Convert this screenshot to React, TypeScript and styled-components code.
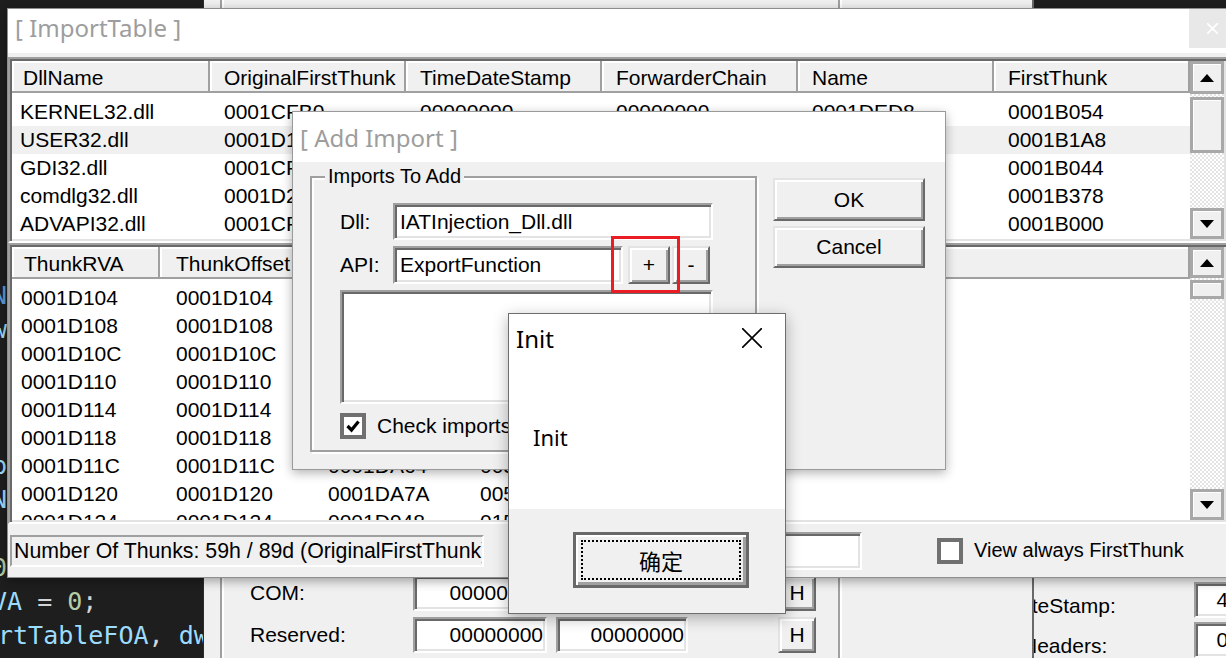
import React from "react";
import styled, { createGlobalStyle, css } from "styled-components";

const SANS = `"Liberation Sans", Arial, sans-serif`;
const UI = `"Noto Sans", "Open Sans", sans-serif`;
const CJK = `"Noto Sans CJK SC", "Noto Sans", sans-serif`;
const MONO = `"DejaVu Sans Mono", "Liberation Mono", monospace`;

const GlobalStyle = createGlobalStyle`
  html, body { margin: 0; padding: 0; background: #1e1e1e; }
  body { overflow: hidden; }
  *, *::before, *::after { box-sizing: border-box; }
`;

const sunken = css`
  border: 2px solid;
  border-color: #a0a0a0 #ffffff #ffffff #a0a0a0;
  box-shadow: inset 2px 2px 0 #696969, inset -2px -2px 0 #e3e3e3;
`;

const raised = css`
  background: #f0f0f0;
  border: 2px solid;
  border-color: #e3e3e3 #696969 #696969 #e3e3e3;
  box-shadow: inset 2px 2px 0 #ffffff, inset -2px -2px 0 #a0a0a0;
`;

const Desktop = styled.div`
  position: relative;
  width: 1226px;
  height: 658px;
  overflow: hidden;
  background: #1e1e1e;
  font-family: ${SANS};
  font-size: 21px;
  color: #000;
`;

/* ---------- code editor behind ---------- */
const Editor = styled.div`
  position: absolute;
  left: 0;
  top: 0;
  width: 203px;
  height: 658px;
  overflow: hidden;
  background: #1e1e1e;
  display: flex;
  flex-direction: column;
  justify-content: flex-end;
  padding-bottom: 5px;
  font-family: ${MONO};
  font-size: 25px;
`;
const CodeLine = styled.div<{ $shift: number }>`
  flex: none;
  height: 34px;
  line-height: 34px;
  white-space: pre;
  margin-left: ${(p) => p.$shift}px;
`;
const Tok = styled.span<{ $c: string }>`
  color: ${(p) => p.$c};
`;

/* ---------- generic windows ---------- */
const Win = styled.div<{ $x: number; $y: number; $w: number; $h: number }>`
  position: absolute;
  left: ${(p) => p.$x}px;
  top: ${(p) => p.$y}px;
  width: ${(p) => p.$w}px;
  height: ${(p) => p.$h}px;
  display: flex;
  flex-direction: column;
  background: #f0f0f0;
`;

const PeWin = styled(Win)`
  border: 1px solid #8e8e8e;
  justify-content: flex-end;
  gap: 5px;
  padding: 0 0 12px 18px;
`;
const PeRow = styled.div`
  display: flex;
  align-items: center;
  height: 35px;
  flex: none;
`;
const PeLabel = styled.span`
  width: 235px;
  flex: none;
  padding-top: 13px;
`;

const DirWin = styled(Win)`
  border-left: 1px solid #2c2c2c;
  border-right: 2px solid #696969;
  flex-direction: row;
  padding-left: 16px;
`;
const DirGroup = styled.div`
  width: 620px;
  height: 100%;
  border-left: 2px solid #a0a0a0;
  border-right: 2px solid #a0a0a0;
  box-shadow: inset 2px 0 0 #fff, 2px 0 0 #fff;
  display: flex;
  flex-direction: column;
  justify-content: flex-end;
  gap: 6px;
  padding: 0 0 5px 28px;
`;
const DirRow = styled.div`
  display: flex;
  align-items: center;
  height: 36px;
  flex: none;
`;
const DirLabel = styled.span`
  width: 163px;
  flex: none;
`;
const NumField = styled.div<{ $w: number; $gap?: number }>`
  ${sunken};
  background: #fff;
  width: ${(p) => p.$w}px;
  height: 36px;
  flex: none;
  margin-left: ${(p) => p.$gap ?? 0}px;
  text-align: right;
  padding-right: 2px;
  line-height: 32px;
  overflow: hidden;
  white-space: nowrap;
`;
const SmallButton = styled.div<{ $w: number; $h: number; $gap?: number }>`
  ${raised};
  width: ${(p) => p.$w}px;
  height: ${(p) => p.$h}px;
  flex: none;
  margin-left: ${(p) => p.$gap ?? 0}px;
  display: flex;
  align-items: center;
  justify-content: center;
  font-size: 21px;
`;

/* ---------- ImportTable window ---------- */
const ImportWin = styled(Win)`
  border: 1px solid #8e8e8e;
  box-shadow: 0 3px 10px rgba(0, 0, 0, 0.35);
`;
const TitleBar = styled.div<{ $h: number; $pb?: number }>`
  flex: none;
  height: ${(p) => p.$h}px;
  background: #fff;
  display: flex;
  align-items: center;
  justify-content: space-between;
  padding-left: 7px;
  padding-bottom: ${(p) => p.$pb ?? 0}px;
`;
const TitleText = styled.span`
  font-family: ${UI};
  font-size: 24px;
  color: #9d9d9d;
  white-space: nowrap;
`;
const CloseBox = styled.div`
  align-self: flex-start;
  width: 46px;
  height: 39px;
  margin-right: 11px;
  background: #e8e8e8;
  display: flex;
  align-items: center;
  justify-content: center;
`;
const ImportBody = styled.div`
  flex: 1;
  display: flex;
  flex-direction: column;
  padding-top: 4px;
`;

/* list view */
const ListFrame = styled.div<{ $h: number }>`
  flex: none;
  width: 1220px;
  height: ${(p) => p.$h}px;
  display: flex;
  background: #fff;
  ${sunken};
  padding: 2px;
`;
const ListBody = styled.div`
  flex: 1;
  min-width: 0;
  overflow: hidden;
  display: flex;
  flex-direction: column;
`;
const GridRow = styled.div<{ $cols: string }>`
  display: grid;
  grid-template-columns: ${(p) => p.$cols};
  flex: none;
`;
const HeaderRow = styled(GridRow)`
  height: 32px;
`;
const HeaderCell = styled.div<{ $pad: number }>`
  background: #f0f0f0;
  border-right: 2px solid #a0a0a0;
  border-bottom: 2px solid #a0a0a0;
  box-shadow: inset 2px 2px 0 #fff;
  padding-left: ${(p) => p.$pad}px;
  padding-top: 4px;
  display: flex;
  align-items: center;
  white-space: nowrap;
  overflow: hidden;
`;
const HeaderGap = styled.div`
  flex: none;
  height: 5px;
`;
const DataRow = styled(GridRow)<{ $sel?: boolean }>`
  height: 28px;
  line-height: 28px;
  background: ${(p) => (p.$sel ? "#f0f0f0" : "transparent")};
`;
const DataCell = styled.div<{ $pad: number }>`
  padding-left: ${(p) => p.$pad}px;
  white-space: nowrap;
  overflow: hidden;
`;
const ScrollBar = styled.div`
  flex: none;
  width: 34px;
  display: flex;
  flex-direction: column;
  background: #f0f0f0;
`;
const ScrollPart = styled.div<{ $h: number }>`
  flex: none;
  height: ${(p) => p.$h}px;
  background: #f0f0f0;
  border: 3px solid #a8a8a8;
  box-shadow: inset 1px 1px 0 #fff;
  display: flex;
  align-items: center;
  justify-content: center;
`;
const Track = styled.div<{ $h?: number }>`
  flex: ${(p) => (p.$h ? "none" : "1")};
  height: ${(p) => (p.$h ? `${p.$h}px` : "auto")};
  background-color: #ffffff;
  background-image: repeating-conic-gradient(#ffffff 0% 25%, #e4e4e4 0% 50%);
  background-size: 4px 4px;
`;

/* status */
const StatusBar = styled.div`
  flex: 1;
  display: flex;
  align-items: center;
  padding-left: 2px;
`;
const StatusField = styled.div`
  flex: none;
  width: 474px;
  height: 32px;
  border: 2px solid;
  border-color: #a0a0a0 #fff #fff #a0a0a0;
  padding-left: 2px;
  line-height: 28px;
  font-size: 21.3px;
  white-space: nowrap;
  overflow: hidden;
`;
const WhiteEdit = styled.div<{ $w: number; $h: number; $gap?: number }>`
  ${sunken};
  background: #fff;
  flex: none;
  width: ${(p) => p.$w}px;
  height: ${(p) => p.$h}px;
  margin-left: ${(p) => p.$gap ?? 0}px;
  padding-left: 5px;
  line-height: ${(p) => p.$h - 4}px;
  white-space: nowrap;
  overflow: hidden;
`;
const CheckLine = styled.label<{ $gap?: number; $size?: number }>`
  display: flex;
  align-items: center;
  gap: 11px;
  margin-left: ${(p) => p.$gap ?? 0}px;
  font-size: ${(p) => p.$size ?? 21}px;
  white-space: nowrap;
`;
const CheckBox = styled.span`
  flex: none;
  width: 26px;
  height: 26px;
  background: #fff;
  border: 4px solid #707070;
  display: flex;
  align-items: center;
  justify-content: center;
`;

/* ---------- Add Import dialog ---------- */
const AddWin = styled(Win)`
  border: 1px solid #9a9a9a;
  box-shadow: 0 3px 10px rgba(0, 0, 0, 0.3);
`;
const DialogBody = styled.div`
  flex: 1;
  display: flex;
  align-items: flex-start;
  gap: 16px;
  padding: 14px 0 0 17px;
`;
const GroupBox = styled.div`
  position: relative;
  flex: none;
  width: 447px;
  height: 276px;
  border: 2px solid #a0a0a0;
  box-shadow: inset 2px 2px 0 #fff, 2px 2px 0 #fff;
  display: flex;
  flex-direction: column;
  padding: 25px 0 0 28px;
`;
const GroupLegend = styled.span`
  position: absolute;
  left: 13px;
  top: -15px;
  line-height: 26px;
  padding: 0 3px;
  background: #f0f0f0;
  font-size: 20px;
`;
const FormRow = styled.div<{ $h: number; $mt?: number }>`
  display: flex;
  align-items: center;
  height: ${(p) => p.$h}px;
  margin-top: ${(p) => p.$mt ?? 0}px;
  flex: none;
`;
const FieldLabel = styled.span`
  width: 53px;
  flex: none;
`;
const PlusWrap = styled.div`
  position: relative;
  margin-left: 5px;
  flex: none;
  display: flex;
`;
const RedMark = styled.div`
  position: absolute;
  left: -17px;
  top: -10px;
  right: -10px;
  bottom: -9px;
  border: 3px solid #ea1c24;
  z-index: 2;
  pointer-events: none;
`;
const ListBox = styled.div`
  ${sunken};
  background: #fff;
  width: 373px;
  height: 114px;
  margin-top: 6px;
  flex: none;
`;
const ButtonCol = styled.div`
  flex: none;
  width: 152px;
  margin-top: 2px;
  display: flex;
  flex-direction: column;
  gap: 5px;
`;
const DlgButton = styled.div<{ $h: number }>`
  ${raised};
  height: ${(p) => p.$h}px;
  display: flex;
  align-items: center;
  justify-content: center;
  font-size: 21px;
`;

/* ---------- Message box ---------- */
const MsgWin = styled(Win)`
  border: 1px solid #6e6e6e;
  box-shadow: 0 4px 14px rgba(0, 0, 0, 0.3);
`;
const MsgTop = styled.div`
  flex: none;
  height: 195px;
  background: #fff;
  display: flex;
  flex-direction: column;
`;
const MsgTitleRow = styled.div`
  height: 48px;
  display: flex;
  align-items: center;
  justify-content: space-between;
  padding: 0 23px 0 7px;
`;
const MsgTitle = styled.span`
  font-family: ${UI};
  font-size: 24px;
  color: #000;
`;
const MsgText = styled.div`
  margin-top: 62px;
  padding-left: 24px;
  line-height: 26px;
  font-family: ${UI};
  font-size: 22px;
  color: #000;
`;
const MsgFooter = styled.div`
  flex: 1;
  display: flex;
  justify-content: flex-end;
  align-items: flex-start;
  padding: 23px 36px 0 0;
`;
const DefaultButton = styled.div`
  width: 176px;
  height: 56px;
  background: #f0f0f0;
  border: 3px solid #686868;
  box-shadow: inset 2px 2px 0 #fff, inset -3px -3px 0 #a0a0a0;
  outline: 2px dotted #000;
  outline-offset: -10px;
  display: flex;
  align-items: center;
  justify-content: center;
  font-family: ${CJK};
  font-size: 22px;
  color: #000;
`;

/* ---------- icons ---------- */
const UpArrow = () => (
  <svg width="14" height="8" viewBox="0 0 14 8">
    <polygon points="0,8 14,8 7,0" fill="#000" />
  </svg>
);
const DownArrow = () => (
  <svg width="14" height="8" viewBox="0 0 14 8">
    <polygon points="0,0 14,0 7,8" fill="#000" />
  </svg>
);
const CheckMark = () => (
  <svg width="16" height="16" viewBox="0 0 16 16">
    <path d="M2.5 8 L6.5 12 L13.5 3.5" fill="none" stroke="#000" strokeWidth="3.2" />
  </svg>
);
const XIcon = ({ size, color, w }: { size: number; color: string; w: number }) => (
  <svg width={size} height={size} viewBox={`0 0 ${size} ${size}`}>
    <path d={`M0 0 L${size} ${size} M${size} 0 L0 ${size}`} stroke={color} strokeWidth={w} />
  </svg>
);

/* ---------- list view component ---------- */
type ScrollSpec = { up: number; gap: number; thumb: number; down: number };
function ListView(props: {
  height: number;
  cols: number[];
  headers: string[];
  rows: string[][];
  selected?: number;
  headPad: [number, number];
  cellPad: [number, number];
  scroll: ScrollSpec;
}) {
  const tpl = props.cols.map((c) => `${c}px`).join(" ");
  return (
    <ListFrame $h={props.height}>
      <ListBody>
        <HeaderRow $cols={tpl}>
          {props.headers.map((h, i) => (
            <HeaderCell key={i} $pad={i === 0 ? props.headPad[0] : props.headPad[1]}>
              {h}
            </HeaderCell>
          ))}
        </HeaderRow>
        <HeaderGap />
        {props.rows.map((r, ri) => (
          <DataRow key={ri} $cols={tpl} $sel={ri === props.selected}>
            {r.map((c, ci) => (
              <DataCell key={ci} $pad={ci === 0 ? props.cellPad[0] : props.cellPad[1]}>
                {c}
              </DataCell>
            ))}
          </DataRow>
        ))}
      </ListBody>
      <ScrollBar>
        <ScrollPart $h={props.scroll.up}>
          <UpArrow />
        </ScrollPart>
        <Track $h={props.scroll.gap} />
        <ScrollPart $h={props.scroll.thumb} />
        <Track />
        <ScrollPart $h={props.scroll.down}>
          <DownArrow />
        </ScrollPart>
      </ScrollBar>
    </ListFrame>
  );
}

/* ---------- data ---------- */
const COL = { v: "#9cdcfe", o: "#d4d4d4", n: "#b5cea8", k: "#569cd6" };
type Line = { shift: number; toks: [string, string][] };
const blank: Line = { shift: 0, toks: [["    ", COL.o]] };
const codeLines: Line[] = [
  blank,
  blank,
  blank,
  blank,
  blank,
  blank,
  blank,
  blank,
  { shift: -8, toks: [["NULL", COL.k]] },
  { shift: -8, toks: [["wImportRVA", COL.v]] },
  blank,
  blank,
  blank,
  { shift: -8, toks: [["pImportDesc", COL.v]] },
  { shift: -8, toks: [["NULL", COL.v]] },
  blank,
  { shift: -8, toks: [["0", COL.n]] },
  { shift: -8, toks: [["VA", COL.v], [" = ", COL.o], ["0", COL.n], [";", COL.o]] },
  { shift: -2, toks: [["rtTableFOA", COL.v], [", ", COL.o], ["dwSize", COL.v], [");", COL.o]] },
];

const topRows = [
  ["KERNEL32.dll", "0001CFB0", "00000000", "00000000", "0001DED8", "0001B054"],
  ["USER32.dll", "0001D1A4", "00000000", "00000000", "0001E1F0", "0001B1A8"],
  ["GDI32.dll", "0001CF98", "00000000", "00000000", "0001E2A6", "0001B044"],
  ["comdlg32.dll", "0001D2CC", "00000000", "00000000", "0001E33A", "0001B378"],
  ["ADVAPI32.dll", "0001CF54", "00000000", "00000000", "0001E3C8", "0001B000"],
];

const thunks = ["104", "108", "10C", "110", "114", "118", "11C", "120", "124"];
const values = ["0001D9E6", "0001D9F8", "0001DA0A", "0001DA1C", "0001DA2E", "0001DA40", "0001DA64", "0001DA7A", "0001D948"];
const hints = ["0345", "0286", "04F2", "0219", "0052", "00C4", "0034", "0059", "015D"];
const names = ["LoadLibraryA", "GetProcAddress", "VirtualProtect", "GetModuleHandleA", "CloseHandle", "CreateFileA", "ReadFile", "lstrlenA", "ExitProcess"];
const bottomRows = thunks.map((t, i) => [`0001D${t}`, `0001D${t}`, values[i], hints[i], names[i]]);

export default function App() {
  return (
    <>
      <GlobalStyle />
      <Desktop>
        <Editor>
          {codeLines.map((l, i) => (
            <CodeLine key={i} $shift={l.shift}>
              {l.toks.map(([t, c], j) => (
                <Tok key={j} $c={c}>
                  {t}
                </Tok>
              ))}
            </CodeLine>
          ))}
        </Editor>

        <PeWin $x={940} $y={10} $w={420} $h={660}>
          <PeRow>
            <PeLabel>TimeDateStamp:</PeLabel>
            <NumField $w={128}>4E9A3C21</NumField>
          </PeRow>
          <PeRow>
            <PeLabel>SizeOfHeaders:</PeLabel>
            <NumField $w={120}>00000400</NumField>
          </PeRow>
        </PeWin>

        <DirWin $x={203} $y={0} $w={831} $h={658}>
          <DirGroup>
            <DirRow>
              <DirLabel>COM:</DirLabel>
              <NumField $w={134}>00000000</NumField>
              <NumField $w={132} $gap={9}>00000000</NumField>
              <SmallButton $w={38} $h={36} $gap={90}>H</SmallButton>
            </DirRow>
            <DirRow>
              <DirLabel>Reserved:</DirLabel>
              <NumField $w={134}>00000000</NumField>
              <NumField $w={132} $gap={9}>00000000</NumField>
              <SmallButton $w={38} $h={36} $gap={90}>H</SmallButton>
            </DirRow>
          </DirGroup>
        </DirWin>

        <ImportWin $x={7} $y={8} $w={1240} $h={570}>
          <TitleBar $h={44} $pb={8}>
            <TitleText>[ ImportTable ]</TitleText>
            <CloseBox>
              <XIcon size={11} color="#ffffff" w={1.6} />
            </CloseBox>
          </TitleBar>
          <ImportBody>
            <ListView
              height={186}
              cols={[198, 196, 196, 196, 196, 196]}
              headers={["DllName", "OriginalFirstThunk", "TimeDateStamp", "ForwarderChain", "Name", "FirstThunk"]}
              rows={topRows}
              selected={1}
              headPad={[11, 14]}
              cellPad={[8, 14]}
              scroll={{ up: 33, gap: 3, thumb: 56, down: 31 }}
            />
            <ListView
              height={281}
              cols={[148, 152, 152, 152, 574]}
              headers={["ThunkRVA", "ThunkOffset", "ThunkValue", "Hint", "ApiName"]}
              rows={bottomRows}
              headPad={[12, 16]}
              cellPad={[9, 16]}
              scroll={{ up: 31, gap: 2, thumb: 19, down: 31 }}
            />
            <StatusBar>
              <StatusField>Number Of Thunks: 59h / 89d (OriginalFirstThunk)</StatusField>
              <WhiteEdit $w={250} $h={38} $gap={128} />
              <CheckLine $gap={75} $size={20}>
                <CheckBox />
                View always FirstThunk
              </CheckLine>
            </StatusBar>
          </ImportBody>
        </ImportWin>

        <AddWin $x={292} $y={111} $w={654} $h={359}>
          <TitleBar $h={50}>
            <TitleText>[ Add Import ]</TitleText>
          </TitleBar>
          <DialogBody>
            <GroupBox>
              <GroupLegend>Imports To Add</GroupLegend>
              <FormRow $h={37}>
                <FieldLabel>Dll:</FieldLabel>
                <WhiteEdit $w={320} $h={37}>IATInjection_Dll.dll</WhiteEdit>
              </FormRow>
              <FormRow $h={38} $mt={6}>
                <FieldLabel>API:</FieldLabel>
                <WhiteEdit $w={230} $h={38}>ExportFunction</WhiteEdit>
                <PlusWrap>
                  <SmallButton $w={42} $h={38}>+</SmallButton>
                  <RedMark />
                </PlusWrap>
                <SmallButton $w={38} $h={38} $gap={2}>-</SmallButton>
              </FormRow>
              <ListBox />
              <FormRow $h={25} $mt={9}>
                <CheckLine $size={21}>
                  <CheckBox>
                    <CheckMark />
                  </CheckBox>
                  Check imports
                </CheckLine>
              </FormRow>
            </GroupBox>
            <ButtonCol>
              <DlgButton $h={43}>OK</DlgButton>
              <DlgButton $h={42}>Cancel</DlgButton>
            </ButtonCol>
          </DialogBody>
        </AddWin>

        <MsgWin $x={508} $y={313} $w={278} $h={301}>
          <MsgTop>
            <MsgTitleRow>
              <MsgTitle>Init</MsgTitle>
              <XIcon size={20} color="#000000" w={1.6} />
            </MsgTitleRow>
            <MsgText>Init</MsgText>
          </MsgTop>
          <MsgFooter>
            <DefaultButton>确定</DefaultButton>
          </MsgFooter>
        </MsgWin>
      </Desktop>
    </>
  );
}
